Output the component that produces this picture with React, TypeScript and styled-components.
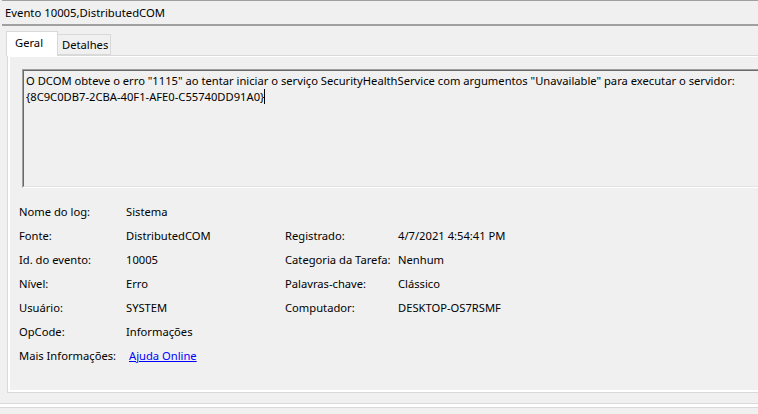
import React from "react";
import styled, { createGlobalStyle } from "styled-components";

const Global = createGlobalStyle`
  html, body { margin: 0; padding: 0; background: #f0f0f0; }
  body { font-family: "Noto Sans", "Liberation Sans", sans-serif; font-size: 11.2px; color: #000; }
  * { box-sizing: border-box; }
`;

const Window = styled.div`
  width: 758px;
  height: 414px;
  overflow: hidden;
  background: #f0f0f0;
  display: flex;
  flex-direction: column;
`;

const TitleBar = styled.div`
  margin-left: 2px;
  height: 26px;
  border-top: 1px solid #a0a0a0;
  border-bottom: 2px solid #a0a0a0;
  display: flex;
  align-items: center;
  padding-left: 3px;
  font-size: 11.3px;
  white-space: nowrap;
`;

const TabStrip = styled.div`
  display: flex;
  align-items: flex-end;
  padding-left: 6px;
  margin-top: 5px;
  height: 25px;
  position: relative;
  z-index: 1;
  margin-bottom: -1px;
`;

const Tab = styled.div<{ $active?: boolean }>`
  width: ${(p) => (p.$active ? "52px" : "54px")};
  height: ${(p) => (p.$active ? "25px" : "21px")};
  padding-left: ${(p) => (p.$active ? "8px" : "4px")};
  display: flex;
  align-items: ${(p) => (p.$active ? "flex-start" : "center")};
  padding-top: ${(p) => (p.$active ? "3px" : "0")};
  background: ${(p) => (p.$active ? "#ffffff" : "#f0f0f0")};
  border: 1px solid #d9d9d9;
  border-bottom: ${(p) => (p.$active ? "none" : "1px solid #d9d9d9")};
  margin-left: ${(p) => (p.$active ? "0" : "-1px")};
  margin-bottom: ${(p) => (p.$active ? "0" : "1px")};
  white-space: nowrap;
`;

const Panel = styled.div`
  margin-left: 7px;
  width: 780px;
  height: 338px;
  border: 1px solid #d9d9d9;
  background: #ffffff;
  padding: 1px 0 2px 2px;
  display: flex;
`;

const Inner = styled.div`
  flex: 1;
  background: #f0f0f0;
  display: flex;
  flex-direction: column;
`;

const MessageBox = styled.div`
  margin: 12px 0 0 12px;
  height: 119px;
  border-top: 1px solid #a0a0a0;
  border-left: 1px solid #a0a0a0;
  border-bottom: 1px solid #ffffff;
  border-right: 1px solid #ffffff;
  background: #f0f0f0;
`;

const MessageInner = styled.div`
  height: 100%;
  border-top: 1px solid #696969;
  border-left: 1px solid #696969;
  border-bottom: 1px solid #e3e3e3;
  border-right: 1px solid #e3e3e3;
  padding: 2px 2px;
  line-height: 16px;
  white-space: pre;
`;

const Caret = styled.span`
  display: inline-block;
  width: 1px;
  height: 15px;
  background: #000;
  vertical-align: -3px;
`;

const Fields = styled.div`
  margin-top: 11px;
  padding-left: 9px;
  display: grid;
  grid-template-columns: 107px 159px 113px auto;
  grid-auto-rows: 24px;
  align-items: center;
  white-space: nowrap;
`;

const Label = styled.div``;
const Value = styled.div``;

const Link = styled.a`
  color: #0000ff;
  text-decoration: underline;
  margin-left: 3px;
  cursor: pointer;
`;

const Footer = styled.div`
  margin-top: 10px;
  height: 5px;
  border-top: 1px solid #d9d9d9;
  border-bottom: 1px solid #d9d9d9;
  background: #ffffff;
`;

type Row = [string, React.ReactNode, string?, string?];

const rows: Row[] = [
  ["Nome do log:", "Sistema"],
  ["Fonte:", "DistributedCOM", "Registrado:", "4/7/2021 4:54:41 PM"],
  ["Id. do evento:", "10005", "Categoria da Tarefa:", "Nenhum"],
  ["Nível:", "Erro", "Palavras-chave:", "Clássico"],
  ["Usuário:", "SYSTEM", "Computador:", "DESKTOP-OS7RSMF"],
  ["OpCode:", "Informações"],
  ["Mais Informações:", <Link key="l">Ajuda Online</Link>],
];

export default function App() {
  return (
    <Window>
      <Global />
      <TitleBar>Evento 10005,DistributedCOM</TitleBar>
      <TabStrip>
        <Tab $active>Geral</Tab>
        <Tab>Detalhes</Tab>
      </TabStrip>
      <Panel>
        <Inner>
          <MessageBox>
            <MessageInner>
              {'O DCOM obteve o erro "1115" ao tentar iniciar o serviço SecurityHealthService com argumentos "Unavailable" para executar o servidor:\n{8C9C0DB7-2CBA-40F1-AFE0-C55740DD91A0}'}
              <Caret />
            </MessageInner>
          </MessageBox>
          <Fields>
            {rows.map((r, i) => (
              <React.Fragment key={i}>
                <Label>{r[0]}</Label>
                <Value>{r[1]}</Value>
                <Label>{r[2] ?? ""}</Label>
                <Value>{r[3] ?? ""}</Value>
              </React.Fragment>
            ))}
          </Fields>
        </Inner>
      </Panel>
      <Footer />
    </Window>
  );
}
